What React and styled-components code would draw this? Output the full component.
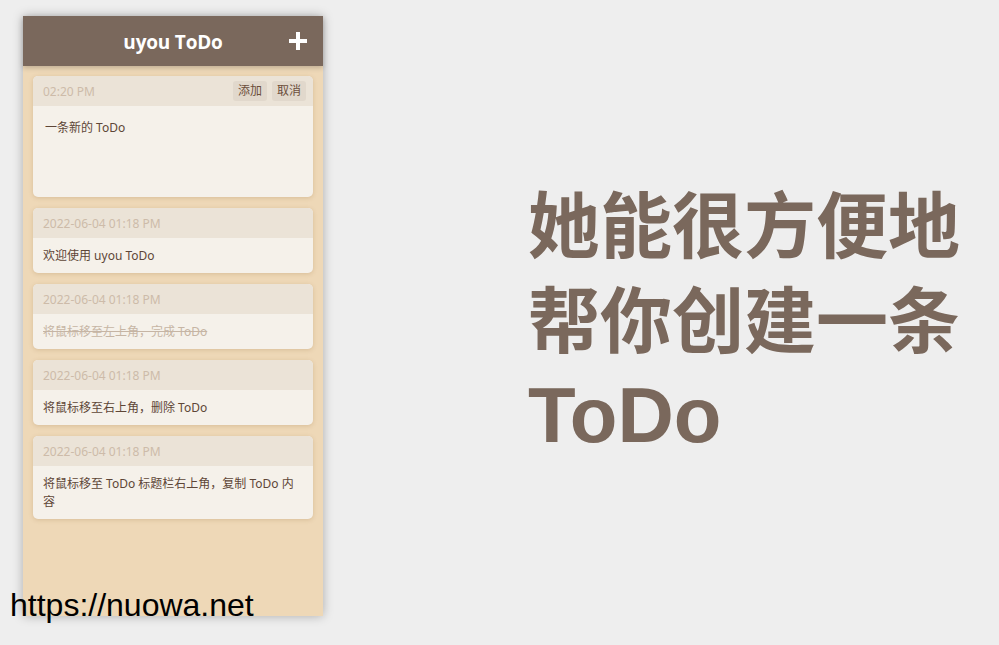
import React from "react";
import styled, { createGlobalStyle } from "styled-components";

const GlobalStyle = createGlobalStyle`
  html, body {
    margin: 0;
    padding: 0;
    background: #eeeeee;
  }
  body {
    font-family: "Noto Sans", "Noto Sans CJK SC", sans-serif;
  }
`;

const Page = styled.div`
  position: relative;
  height: 645px;
  display: flex;
  align-items: flex-start;
  padding: 16px 0 0 23px;
  box-sizing: border-box;
  overflow: hidden;
`;

const Panel = styled.div`
  width: 300px;
  height: 600px;
  background: #eed8b7;
  box-shadow: 0 0 10px rgba(0, 0, 0, 0.28);
  display: flex;
  flex-direction: column;
  flex-shrink: 0;
`;

const Header = styled.div`
  height: 50px;
  background: #7a685c;
  box-shadow: 0 2px 5px rgba(0, 0, 0, 0.2);
  display: flex;
  align-items: center;
  justify-content: center;
  position: relative;
`;

const Title = styled.h1`
  margin: 2px 0 0;
  color: #fff;
  font-size: 19px;
  font-weight: 700;
  font-family: "Open Sans", "Noto Sans CJK SC", sans-serif;
  letter-spacing: -0.2px;
`;

const AddButton = styled.div`
  position: absolute;
  right: 16px;
  top: 16px;
  width: 18px;
  height: 18px;
  display: flex;
`;

const List = styled.div`
  display: flex;
  flex-direction: column;
  gap: 11px;
  padding: 10px;
`;

const Card = styled.div`
  border-radius: 5px;
  overflow: hidden;
  background: #f5f1ea;
  box-shadow: 0 1px 4px rgba(150, 110, 60, 0.25);
`;

const CardHead = styled.div`
  height: 30px;
  background: #ebe3d7;
  display: flex;
  align-items: center;
  justify-content: space-between;
  padding: 0 7px 0 10px;
`;

const Time = styled.span`
  font-size: 12px;
  color: #cdbba9;
`;

const Actions = styled.div`
  display: flex;
  gap: 5px;
`;

const SmallButton = styled.span`
  font-size: 12px;
  color: #6b4e3b;
  background: #e1d8cc;
  border-radius: 3px;
  padding: 2px 5px;
  line-height: 16px;
`;

const CardBody = styled.div`
  padding: ${(p) => (p.$editing ? "13px 12px" : "9px 10px 8px")};
  min-height: ${(p) => (p.$editing ? "65px" : "18px")};
  font-size: 12px;
  line-height: 18px;
  color: ${(p) => (p.$done ? "#c6b5a4" : "#5e4637")};
  text-decoration: ${(p) => (p.$done ? "line-through" : "none")};
`;

const Headline = styled.div`
  margin-left: 205px;
  align-self: center;
  margin-top: -26px;
  font-family: "Noto Sans CJK SC", "Liberation Sans", sans-serif;
  font-weight: 700;
  font-size: 72px;
  line-height: 95px;
  color: #7a685c;
  width: 440px;
`;

const Latin = styled.span`
  font-family: "Liberation Sans", sans-serif;
  font-size: 78px;
  line-height: 95px;
`;

const Watermark = styled.div`
  position: absolute;
  left: 10px;
  top: 587px;
  font-family: "Liberation Sans", Arial, sans-serif;
  font-size: 32px;
  color: #000;
`;

const todos = [
  { time: "2022-06-04 01:18 PM", text: "欢迎使用 uyou ToDo" },
  { time: "2022-06-04 01:18 PM", text: "将鼠标移至左上角，完成 ToDo", done: true },
  { time: "2022-06-04 01:18 PM", text: "将鼠标移至右上角，删除 ToDo" },
  { time: "2022-06-04 01:18 PM", text: "将鼠标移至 ToDo 标题栏右上角，复制 ToDo 内容" },
];

export default function App() {
  return (
    <Page>
      <GlobalStyle />
      <Panel>
        <Header>
          <Title>uyou ToDo</Title>
          <AddButton>
            <svg width="18" height="18" viewBox="0 0 18 18">
              <path d="M7 0h4v7h7v4h-7v7H7v-7H0V7h7z" fill="#fff" />
            </svg>
          </AddButton>
        </Header>
        <List>
          <Card>
            <CardHead>
              <Time>02:20 PM</Time>
              <Actions>
                <SmallButton>添加</SmallButton>
                <SmallButton>取消</SmallButton>
              </Actions>
            </CardHead>
            <CardBody $editing>一条新的 ToDo</CardBody>
          </Card>
          {todos.map((t, i) => (
            <Card key={i}>
              <CardHead>
                <Time>{t.time}</Time>
              </CardHead>
              <CardBody $done={t.done}>{t.text}</CardBody>
            </Card>
          ))}
        </List>
      </Panel>
      <Headline>
        她能很方便地
        <br />
        帮你创建一条
        <br />
        <Latin>ToDo</Latin>
      </Headline>
      <Watermark>https://nuowa.net</Watermark>
    </Page>
  );
}
